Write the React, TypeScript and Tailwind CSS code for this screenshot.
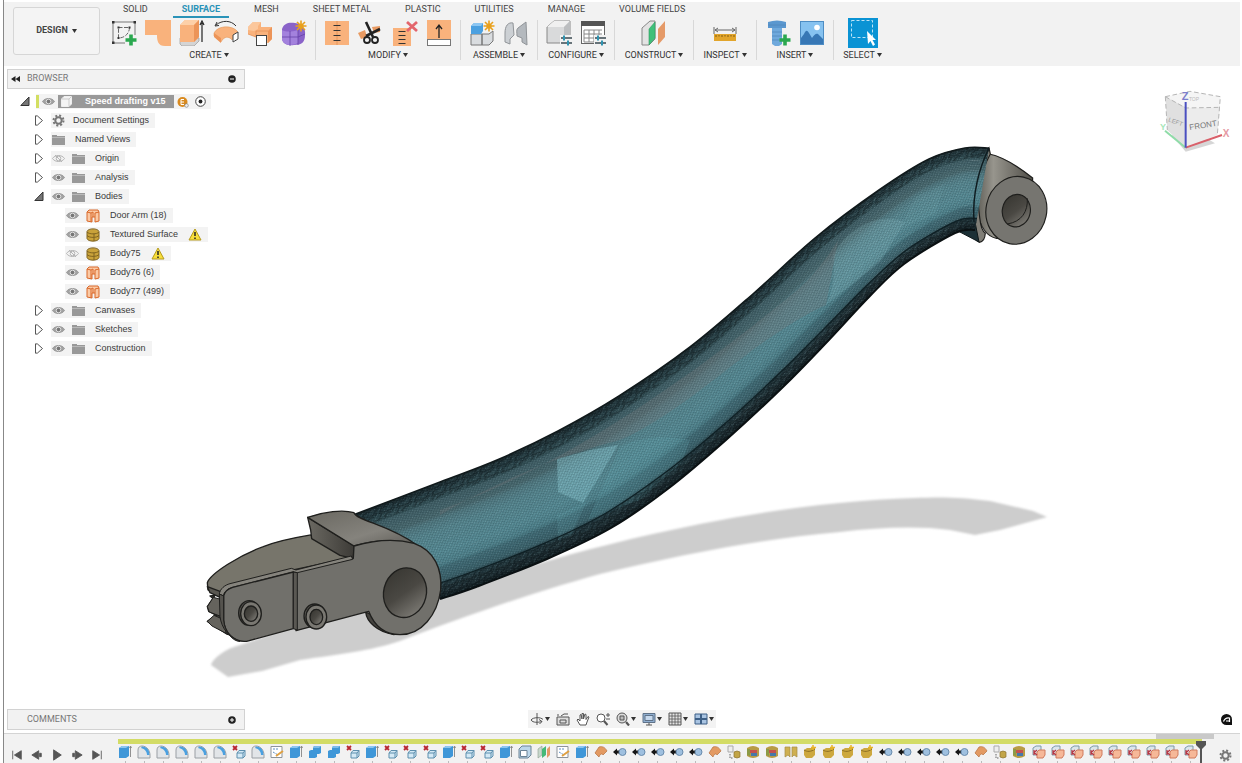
import type { ReactNode } from "react";
import clsx from "clsx";

type Pt = [number, number];

const Caret = () => (
  <svg width="5" height="4" viewBox="0 0 5 4" className="shrink-0">
    <path d="M0 0H5L2.5 4Z" fill="#333" />
  </svg>
);

/* ---------- toolbar icons (26 x 26) ---------- */

const Icon = ({ children, size = 26 }: { children: ReactNode; size?: number }) => (
  <svg width={size} height={size} viewBox={`0 0 ${size} ${size}`} fill="none" className="shrink-0">
    {children}
  </svg>
);

const Plus = ({ x, y }: { x: number; y: number }) => (
  <path d={`M${x} ${y - 5.5}V${y + 5.5}M${x - 5.5} ${y}H${x + 5.5}`} stroke="#2aa84f" strokeWidth="3.6" />
);

const Star = ({ x, y }: { x: number; y: number }) => (
  <g stroke="#e8a01c" strokeWidth="1.6">
    <path d={`M${x} ${y - 5.5}V${y + 5.5}M${x - 5.5} ${y}H${x + 5.5}M${x - 4} ${y - 4}L${x + 4} ${y + 4}M${x + 4} ${y - 4}L${x - 4} ${y + 4}`} />
    <circle cx={x} cy={y} r="2.6" fill="#e8a01c" stroke="none" />
  </g>
);

const SketchIcon = () => (
  <Icon>
    <path d="M2 2H24V15M2 2V23H14" stroke="#777" />
    <path d="M7.500 7.500H18.500C18.500 13 14 18 7.500 18Z" stroke="#666" strokeDasharray="4 1.5" />
    <g fill="#333">
      <rect x="1" y="1" width="2.500" height="2.500" />
      <rect x="22.500" y="1" width="2.500" height="2.500" />
      <rect x="1" y="21.500" width="2.500" height="2.500" />
      <rect x="6.500" y="6.500" width="2" height="2" />
      <rect x="17.500" y="6.500" width="2" height="2" />
      <rect x="6.500" y="17" width="2" height="2" />
    </g>
    <Plus x={20} y={20} />
  </Icon>
);

const PatchIcon = () => (
  <Icon>
    <path d="M0 0H26V26H20C13 26 12 21 12 15H0Z" fill="#f9b27c" />
  </Icon>
);

const ExtrudeIcon = () => (
  <Icon>
    <path d="M1 22V24L3 26H15L20 21V18H1Z" fill="#d4d4d4" stroke="#999" strokeWidth=".7" />
    <path d="M1 5L6 0H20V17L15 22H1Z" fill="#f9b27c" />
    <path d="M1 5L6 0H20L15 5Z" fill="#fdd0a8" />
    <path d="M15 5L20 0V17L15 22Z" fill="#ec9458" />
    <path d="M23 22V3M21 5L23 1L25 5" stroke="#222" strokeWidth="1.2" />
  </Icon>
);

const RevolveIcon = () => (
  <Icon>
    <path d="M1 13C5 5 20 5 25 12L19 20C16 16 11 16 8 22L1 16Z" fill="#f9b27c" stroke="#e39a60" strokeWidth=".6" />
    <path d="M1 13L8 18V23L1 17Z" fill="#ec9458" />
    <path d="M20 15L25 12V19L20 22Z" fill="#fff" stroke="#444" />
    <path d="M3 5C9 0 18 0 23 6M2 6L6 5.500M2 6L4 2" stroke="#333" />
  </Icon>
);

const SweepIcon = () => (
  <Icon>
    <path d="M1 7L6 2H14V7H25V19L21 23H9V17L1 14Z" fill="#f9b27c" />
    <path d="M1 7L6 2H14L11 6V9L7 11L1 10Z" fill="#fbc79c" />
    <path d="M21 11L25 7V19L21 23Z" fill="#ec9458" />
    <path d="M1 14L9 17V11H21" stroke="#e58f55" strokeWidth=".8" />
    <rect x="9.500" y="15.500" width="10" height="10" fill="#fff" stroke="#444" />
  </Icon>
);

const FormIcon = () => (
  <Icon>
    <path d="M1 9C3 3 8 2 14 3C21 4 25 8 24 15C24 22 21 25 13 25C5 26 1 23 1 18Z" fill="#8a63c9" />
    <path d="M1 10C5 12 10 12 17 10L17 23C11 26 4 26 1 20Z" fill="#a382dd" />
    <path d="M9 11V26M1 17H17L24 14M17 10V25" stroke="#6541a8" strokeWidth=".8" />
    <Star x={20} y={6} />
  </Icon>
);

const StitchIcon = () => (
  <Icon>
    <rect x="1" y="1" width="24" height="24" fill="#f9b27c" />
    <path d="M13 1V25" stroke="#e08f54" strokeWidth=".8" />
    <path d="M9.500 5.500H16.500M9.500 10.500H16.500M9.500 15.500H16.500M9.500 20.500H16.500" stroke="#333" />
  </Icon>
);

const TrimIcon = () => (
  <Icon>
    <path d="M0 13L7 10L9 17L3 19Z" fill="#e89a62" />
    <path d="M14 7L22 6V12L16 13Z" fill="#e89a62" />
    <path d="M8 2L15 17M22 9L8 16" stroke="#222" strokeWidth="2.600" />
    <circle cx="9" cy="20" r="3" stroke="#222" strokeWidth="1.800" />
    <circle cx="17" cy="20" r="3" stroke="#222" strokeWidth="1.800" />
  </Icon>
);

const UnstitchIcon = () => (
  <Icon>
    <rect x="1" y="8" width="18" height="18" fill="#f9b27c" />
    <path d="M6.500 11.500H13.500M6.500 15.500H13.500M6.500 19.500H13.500M6.500 23.500H13.500" stroke="#333" />
    <path d="M15 2L25 11M25 2L15 11" stroke="#e3656c" strokeWidth="2.800" />
  </Icon>
);

const ExtendIcon = () => (
  <Icon>
    <rect x="1" y="0" width="24" height="19" fill="#f9b27c" />
    <rect x="1.500" y="19.500" width="23" height="6" fill="#fff" stroke="#777" />
    <path d="M13 18V6M10 9L13 5L16 9" stroke="#222" strokeWidth="1.300" />
  </Icon>
);

const NewComponentIcon = () => (
  <Icon>
    <path d="M2 14H13V25H2ZM13 14H20L24 11V21L20 25H13Z" fill="#d9dcdf" stroke="#777" />
    <path d="M2 6L5 3H14V11L12 14H2Z" fill="#4ba0e0" />
    <path d="M2 6L5 3H14L12 6Z" fill="#8cc6f2" />
    <Star x={20} y={6} />
  </Icon>
);

const JointIcon = () => (
  <Icon>
    <path d="M2 13C2 6 5 2 10 3L11 15L7 19V24L2 22Z" fill="#ccd0d4" stroke="#909498" />
    <path d="M23 2L24 25L19 22V18L14 16C14 12 13 10 15 8L19 5Z" fill="#b4b9be" stroke="#909498" />
  </Icon>
);

const Sliders = () => (
  <g stroke="#3a4a52" strokeWidth="1.300">
    <rect x="14" y="15" width="12" height="11" fill="#f2f2f2" stroke="none" />
    <path d="M15 18H26M15 23H26" />
    <path d="M18 15.500V20.500M22 20.500V25.500" stroke="#2f93b0" strokeWidth="2" />
  </g>
);

const ConfigureIcon = () => (
  <Icon>
    <path d="M1 7L8 1H24V18L19 23H1Z" fill="#d9dadb" stroke="#888" />
    <path d="M1 7L8 1H24L18 7Z" fill="#f0f0f0" />
    <path d="M18 7L24 1V18L18 23Z" fill="#bcbec0" />
    <Sliders />
  </Icon>
);

const TableIcon = () => (
  <Icon>
    <rect x="1.500" y="1.500" width="23" height="22" fill="#fff" stroke="#666" />
    <rect x="1" y="1" width="24" height="5" fill="#555" />
    <path d="M4 10H22M4 14H22M4 18H22M4 22H14M4 10V22M9 10V22M14 10V22M19 10V22" stroke="#888" />
    <Sliders />
  </Icon>
);

const PlaneIcon = () => (
  <Icon>
    <path d="M1 8L9 1H14V19L8 25H1Z" fill="#e3e3e3" stroke="#888" />
    <path d="M8 9L14 2V18L8 25Z" fill="#3fc07a" stroke="#2e9c5e" strokeWidth=".6" />
    <path d="M17 9L24 1V17L17 25Z" fill="#e59a68" />
  </Icon>
);

const MeasureIcon = () => (
  <Icon>
    <path d="M2 7V14M24 7V14M3 10H23M6 8L3 10L6 12M20 8L23 10L20 12" stroke="#666" />
    <rect x="2" y="14" width="22" height="7" fill="#e2a52b" />
    <path d="M4 15V17M7 15V16.500M10 15V17M13 15V16.500M16 15V17M19 15V16.500M22 15V17" stroke="#805c12" />
  </Icon>
);

const BoltIcon = () => (
  <Icon>
    <path d="M3 2Q12 -1 21 2V8H3Z" fill="#5a97cf" />
    <path d="M7 8H17V24L14 26H10L7 24Z" fill="#6fa9dc" />
    <path d="M7 12H17M7 16H17M7 20H17M3 5H21" stroke="#5088bb" strokeWidth=".8" />
    <Plus x={20} y={20} />
  </Icon>
);

const ImageIcon = () => (
  <Icon>
    <rect x="1.500" y="1.500" width="23" height="23" fill="#86c2f0" stroke="#4e8dc4" />
    <path d="M2 18L5 14C7 10 8 10 10 13L13 18C15 15 17 13 19 14L24 19V24H2Z" fill="#3777b5" />
    <circle cx="18" cy="7.500" r="2.800" fill="#fff" />
  </Icon>
);

const SelectIcon = () => (
  <Icon size={30}>
    <rect width="30" height="30" fill="#0a93d4" />
    <rect x="3.500" y="2.500" width="21" height="17" stroke="#bfe4f7" strokeDasharray="3 2" />
    <path d="M19 13L20 26L22.500 23L25 28L27 26.500L24.500 22H28Z" fill="#fff" />
  </Icon>
);

const tabs = ["SOLID", "SURFACE", "MESH", "SHEET METAL", "PLASTIC", "UTILITIES", "MANAGE", "VOLUME FIELDS"];

const groups: { label: string; width?: string; icons: ReactNode[] }[] = [
  { label: "CREATE", icons: [<SketchIcon />, <PatchIcon />, <ExtrudeIcon />, <RevolveIcon />, <SweepIcon />, <FormIcon />] },
  { label: "MODIFY", icons: [<StitchIcon />, <TrimIcon />, <UnstitchIcon />, <ExtendIcon />] },
  { label: "ASSEMBLE", icons: [<NewComponentIcon />, <JointIcon />] },
  { label: "CONFIGURE", icons: [<ConfigureIcon />, <TableIcon />] },
  { label: "CONSTRUCT", width: "w-[79px]", icons: [<PlaneIcon />] },
  { label: "INSPECT", width: "w-[63px]", icons: [<MeasureIcon />] },
  { label: "INSERT", icons: [<BoltIcon />, <ImageIcon />] },
  { label: "SELECT", width: "w-[58px]", icons: [<SelectIcon />] },
];

const Toolbar = () => (
  <header className="mt-[2px] flex h-16 shrink-0 bg-[#f2f2f2]">
    <button className="mt-[5px] ml-[9px] flex h-12 w-[87px] shrink-0 items-center justify-center gap-1 rounded-[3px] border border-[#d6d6d6] bg-[#f4f4f4] text-[9px] font-bold text-[#444]">
      DESIGN <Caret />
    </button>
    <div className="ml-[3px]">
      <nav className="flex h-4 gap-4 pl-[11px]">
        {tabs.map((tab) => (
          <button
            key={tab}
            className={clsx(
              "h-4 border-b-2 px-[9px] text-[9px] leading-[12px] whitespace-nowrap",
              tab === "SURFACE" ? "border-[#2a93b8] font-bold text-[#2a93b8]" : "border-transparent text-[#444]"
            )}
          >
            {tab}
          </button>
        ))}
      </nav>
      <div className="flex pt-[2px]">
        {groups.map((group) => (
          <div
            key={group.label}
            className={clsx("flex h-10 flex-col items-center border-r border-[#d8d8d8] px-2 last:border-transparent", group.width)}
          >
            <div className="flex h-[26px] items-center gap-2">
              {group.icons.map((icon, i) => (
                <button key={i} aria-label={`${group.label} ${i + 1}`}>
                  {icon}
                </button>
              ))}
            </div>
            <button className="mt-[3px] flex items-center gap-[2px] text-[9px] leading-[12px] whitespace-nowrap text-[#333]">
              {group.label} <Caret />
            </button>
          </div>
        ))}
      </div>
    </div>
  </header>
);

/* ---------- browser tree ---------- */

const Eye = ({ off }: { off?: boolean }) => (
  <svg width="13" height="9" viewBox="0 0 13 9" fill="none">
    <path d="M.5 4.500C3 .5 10 .5 12.500 4.500C10 8.500 3 8.500 .5 4.500Z" fill={off ? "none" : "#a2a2a2"} stroke={off ? "#b5b5b5" : "#999"} />
    <circle cx="6.500" cy="4.500" r="2.300" fill={off ? "none" : "#777"} stroke={off ? "#b5b5b5" : "#e0e0e0"} />
    {off && <path d="M3 1L10 8" stroke="#b5b5b5" />}
  </svg>
);

const Folder = () => (
  <svg width="13" height="11" viewBox="0 0 13 11">
    <path d="M0 1H5V2H13V11H0Z" fill="#999" />
    <path d="M0 3.500H13" stroke="#b9b9b9" />
  </svg>
);

const Gear = () => (
  <svg width="13" height="13" viewBox="0 0 13 13" fill="none">
    <circle cx="6.500" cy="6.500" r="3.200" stroke="#777" strokeWidth="2" />
    <circle cx="6.500" cy="6.500" r="5" stroke="#777" strokeWidth="2" strokeDasharray="2 1.930" />
  </svg>
);

const SurfaceBody = () => (
  <svg width="14" height="14" viewBox="0 0 14 14">
    <path d="M1 3L3 1H12L13 3V12L9 13V8H6V13L1 12Z" fill="#fbc9a4" stroke="#d9682a" />
    <path d="M1 3L5 4V13M5 4L7 3V8M13 3L9 4V8" fill="none" stroke="#d9682a" />
  </svg>
);

const SolidBody = () => (
  <svg width="14" height="14" viewBox="0 0 14 14">
    <path d="M1 3.500C2 0 12 0 13 3.500V10.500C12 14 2 14 1 10.500Z" fill="#c9a23a" stroke="#806420" />
    <path d="M1 4C3 6.500 11 6.500 13 4M1 7.500C3 10 11 10 13 7.500M8 5.500V13" fill="none" stroke="#806420" />
  </svg>
);

const Warning = () => (
  <svg width="14" height="13" viewBox="0 0 14 13">
    <path d="M7 1L13 12H1Z" fill="#f7de3a" stroke="#b59a1e" strokeLinejoin="round" />
    <path d="M7 4V8M7 9.500V11" stroke="#222" strokeWidth="1.500" />
  </svg>
);

const Disclosure = ({ open, name }: { open?: boolean; name: string }) => (
  <button aria-label={`Toggle ${name}`} className="flex w-[10px] shrink-0 justify-center">
    <svg width="10" height="11" viewBox="0 0 10 11">
      {open ? <path d="M9 1V9.500H.8Z" fill="#777" stroke="#333" /> : <path d="M1.500 .8V10.200L3.500 10L8.500 5.500L3.500 1Z" fill="#fff" stroke="#555" />}
    </svg>
  </button>
);

type Row = {
  name: string;
  kind: "settings" | "views" | "folder" | "surface" | "solid";
  open?: boolean;
  hidden?: boolean;
  warn?: boolean;
};

const rows: Row[] = [
  { name: "Document Settings", kind: "settings" },
  { name: "Named Views", kind: "views" },
  { name: "Origin", kind: "folder", hidden: true },
  { name: "Analysis", kind: "folder" },
  { name: "Bodies", kind: "folder", open: true },
  { name: "Door Arm (18)", kind: "surface" },
  { name: "Textured Surface", kind: "solid", warn: true },
  { name: "Body75", kind: "solid", hidden: true, warn: true },
  { name: "Body76 (6)", kind: "surface" },
  { name: "Body77 (499)", kind: "surface" },
  { name: "Canvases", kind: "folder" },
  { name: "Sketches", kind: "folder" },
  { name: "Construction", kind: "folder" },
];

const TreeRow = ({ row }: { row: Row }) => {
  const body = row.kind === "surface" || row.kind === "solid";
  const hasEye = body || row.kind === "folder";
  return (
    <li className={clsx("flex h-[19px] items-center", body ? "pl-[61px]" : "pl-[30px]")}>
      {!body && (
        <span className="mr-[7px] flex">
          <Disclosure open={row.open} name={row.name} />
        </span>
      )}
      <div className="flex h-[15px] items-center bg-[#f3f3f3] pr-[6px] pl-px">
        {hasEye && (
          <button aria-label={`Show ${row.name}`} className="mr-[7px]">
            <Eye off={row.hidden} />
          </button>
        )}
        {row.kind === "settings" ? <Gear /> : row.kind === "surface" ? <SurfaceBody /> : row.kind === "solid" ? <SolidBody /> : <Folder />}
        <span className={clsx("whitespace-nowrap", row.kind === "settings" ? "ml-2" : "ml-[10px]")}>{row.name}</span>
        {row.warn && (
          <span className="ml-[10px]">
            <Warning />
          </span>
        )}
      </div>
    </li>
  );
};

const Browser = () => (
  <section className="mt-[3px]">
    <div className="ml-[3px] flex h-5 w-[238px] items-center border border-[#d2d2d2] bg-[#f2f2f2] pl-[3px]">
      <svg width="9" height="6" viewBox="0 0 9 6">
        <path d="M4.500 0V6L0 3ZM9 0V6L4.500 3Z" fill="#222" />
      </svg>
      <h2 className="ml-[7px] text-[9px] text-[#777]">BROWSER</h2>
      <button aria-label="Collapse browser" className="mr-2 ml-auto">
        <svg width="8" height="8" viewBox="0 0 8 8">
          <circle cx="4" cy="4" r="3.800" fill="#222" />
          <path d="M2 4H6" stroke="#fff" />
        </svg>
      </button>
    </div>
    <ul className="mt-[3px] font-['Liberation_Sans',sans-serif] text-[9px] text-[#3a3a3a]">
      <li className="flex h-[19px] items-center pl-4">
        <Disclosure open name="Speed drafting v15" />
        <div className="ml-[6px] flex h-[15px] items-center bg-[#f3f3f3] pr-[5px]">
          <span className="h-[13px] w-[3px] bg-[#d3df62]" />
          <button aria-label="Show Speed drafting v15" className="mx-[3px]">
            <Eye />
          </button>
          <div className="flex h-[13px] items-center bg-[#999] pr-2 pl-[2px] font-bold text-white">
            <svg width="13" height="13" viewBox="0 0 13 13">
              <path d="M1.500 4L4 1.500H11.500V9L9 11.500H1.500Z" fill="#f4f4f4" stroke="#eee" />
              <path d="M1.500 4H9V11.500M9 4L11.500 1.500" fill="none" stroke="#bbb" strokeWidth=".7" />
            </svg>
            <span className="ml-3 whitespace-nowrap">Speed drafting v15</span>
          </div>
          <svg width="12" height="12" viewBox="0 0 12 12" className="ml-[3px]">
            <circle cx="5.500" cy="6" r="5" fill="#d98a1f" />
            <path d="M4 3.500H7M4 6H7M4 8.500H7M4 3.500V8.500" stroke="#fff" fill="none" />
            <circle cx="9.500" cy="9.500" r="1.800" fill="#eee" stroke="#777" strokeWidth=".6" />
          </svg>
          <svg width="11" height="11" viewBox="0 0 11 11" className="ml-[6px]">
            <circle cx="5.500" cy="5.500" r="4.800" fill="#fff" stroke="#444" />
            <circle cx="5.500" cy="5.500" r="1.900" fill="#222" />
          </svg>
        </div>
      </li>
      {rows.map((row) => (
        <TreeRow key={row.name} row={row} />
      ))}
    </ul>
  </section>
);

/* ---------- 3D model ---------- */

// matching points along the upper and lower silhouette of the arm
const upper: Pt[] = [[353, 515], [440, 482], [497, 460], [558, 431], [619, 396], [690, 347], [754, 293], [815, 238], [879, 190], [929, 159], [965, 148], [989, 148]];
const lower: Pt[] = [[440, 599], [476, 587], [547, 559], [611, 528], [669, 488], [726, 440], [783, 387], [826, 343], [869, 297], [904, 264], [955, 233], [975, 230]];

const along = (f: number): Pt[] => upper.map(([x, y], i) => [x + (lower[i][0] - x) * f, y + (lower[i][1] - y) * f]);

// Catmull-Rom through the points, as bezier segments
const curve = (p: Pt[]) =>
  p.slice(1).map(([x, y], i) => {
    const a = p[Math.max(i - 1, 0)];
    const b = p[i];
    const d = p[Math.min(i + 2, p.length - 1)];
    return `C${(b[0] + (x - a[0]) / 6).toFixed(1)} ${(b[1] + (y - a[1]) / 6).toFixed(1)} ${(x - (d[0] - b[0]) / 6).toFixed(1)} ${(y - (d[1] - b[1]) / 6).toFixed(1)} ${x.toFixed(1)} ${y.toFixed(1)}`;
  }).join("");

const line = (f: number) => {
  const p = along(f);
  return `M${p[0]}${curve(p)}`;
};

const band = (from: number, to: number) => {
  const a = along(from);
  const b = along(to).reverse();
  return `M${a[0]}${curve(a)}L${b[0]}${curve(b)}Z`;
};

const stops: [number, number, number, number][] = [
  [0, 26, 40, 44],
  [0.06, 36, 58, 64],
  [0.13, 50, 78, 84],
  [0.15, 64, 94, 101],
  [0.27, 74, 106, 112],
  [0.31, 82, 122, 130],
  [0.4, 88, 136, 145],
  [0.6, 88, 141, 151],
  [0.7, 80, 131, 141],
  [0.73, 66, 110, 120],
  [0.84, 58, 96, 105],
  [0.87, 34, 55, 61],
  [0.94, 27, 41, 46],
  [1, 14, 24, 28],
];

const shade = (f: number) => {
  const i = Math.max(1, stops.findIndex((s) => s[0] >= f));
  const a = stops[i - 1];
  const b = stops[i];
  const t = (f - a[0]) / (b[0] - a[0]);
  return `rgb(${[1, 2, 3].map((k) => Math.round(a[k] + (b[k] - a[k]) * t)).join(",")})`;
};

const STRIPS = 50;

const ArmModel = () => (
  <svg viewBox="4 66 1236 667" preserveAspectRatio="xMidYMid meet" className="absolute inset-0 h-full w-full" role="img" aria-label="Door arm">
    <defs>
      <pattern id="mesh" width="4" height="3" patternUnits="userSpaceOnUse" patternTransform="rotate(-32)">
        <path d="M0 .5H2M2 2H4M0 2L1.500 .5M2 .5L4 2" stroke="#0b2026" strokeWidth=".6" strokeOpacity=".32" fill="none" />
        <path d="M.5 1.500H1.500M3 .5H4" stroke="#b5e0e6" strokeWidth=".6" strokeOpacity=".3" />
      </pattern>
      <pattern id="scales" width="17" height="7" patternUnits="userSpaceOnUse" patternTransform="rotate(-41)">
        <path d="M0 2C3 0 5 1 8 2.500S13 4 17 2M2 5C5 3.500 8 4 11 6M12 5.500L16 4.500M0 6.500L4 6" stroke="#060c0e" strokeWidth=".9" strokeOpacity=".55" fill="none" />
        <path d="M1 3.500H4M9 1H12M13 6.500H15" stroke="#6f989f" strokeWidth=".6" strokeOpacity=".25" />
      </pattern>
      <linearGradient id="bore" x1="0" y1="0" x2="1" y2="1">
        <stop offset="0" stopColor="#35342f" />
        <stop offset=".5" stopColor="#4a4843" />
        <stop offset="1" stopColor="#8a8882" />
      </linearGradient>
      <linearGradient id="barrel" x1="0" y1="0" x2="1" y2="0">
        <stop offset="0" stopColor="#5f5d56" />
        <stop offset=".3" stopColor="#97958d" />
        <stop offset="1" stopColor="#504e48" />
      </linearGradient>
      <linearGradient id="block" x1="0" y1="0" x2="1" y2="1">
        <stop offset="0" stopColor="#6a6861" />
        <stop offset=".6" stopColor="#85837d" />
        <stop offset="1" stopColor="#5c5a55" />
      </linearGradient>
      <linearGradient id="side" x1="0" y1="0" x2="1" y2="0">
        <stop offset="0" stopColor="#6b6962" />
        <stop offset="1" stopColor="#3d3b37" />
      </linearGradient>
      <filter id="soft">
        <feGaussianBlur stdDeviation="1.200" />
      </filter>
    </defs>

    {/* ground shadow */}
    <path
      d="M1047 517L1033 511L990 501C960 497 940 497 915 498C850 500 780 508 700 524C640 536 580 551 530 566L400 590L240 645C225 649 213 658 211 665L228 677L262 671L300 660C340 654 370 651 400 641C450 622 520 596 600 574C680 555 760 539 840 532C880 527 920 526 950 530L975 535L1000 530Z"
      fill="#cdcdcd"
      filter="url(#soft)"
    />

    {/* round end */}
    <g transform="translate(930 130) scale(.33333)" stroke="#1f1f1d" strokeWidth="3.500">
      <path d="M178 72C225 82 268 112 308 144L300 320L200 325C170 320 150 290 140 240C138 170 150 110 178 72Z" fill="url(#barrel)" />
      <ellipse cx="259" cy="241" rx="91" ry="102" fill="#767570" transform="rotate(12 259 241)" />
      <ellipse cx="259" cy="242" rx="42" ry="49" fill="url(#bore)" transform="rotate(12 259 242)" />
      <path d="M292 205C294 245 275 275 232 282" fill="none" strokeWidth="3" />
      <path d="M177 54L181 72C152 125 138 190 149 262C152 290 158 305 166 309C165 325 158 336 148 337C136 332 130 312 130 290C128 200 145 120 177 54Z" fill="#807e77" />
    </g>

    {/* textured skin */}
    <path d="M946 232L958 231L979 242L975 222L974 215L965 216Z" fill="#1c3036" stroke="#0e1719" />
    {Array.from({ length: STRIPS }, (_, i) => (
      <path key={i} d={band(i / STRIPS, Math.min(1, (i + 1.3) / STRIPS))} fill={shade((i + 0.5) / STRIPS)} />
    ))}
    <path d="M557 459L590 450L618 445L601 474L583 503L558 492Z" fill="#8ac8d2" fillOpacity=".5" />
    <path d="M557 515L586 502L572 534L558 540Z" fill="#6fb2bd" fillOpacity=".2" />
    <path d="M620 447C640 436 665 436 690 440L682 462L640 500L588 520Z" fill="#6bb2bd" fillOpacity=".2" />
    <path d="M833 255C850 225 880 212 905 222L880 262L826 305C834 290 835 270 833 255Z" fill="#8fc5cd" fillOpacity=".25" />
    <path d="M900 228L916 196L945 184L935 215Z" fill="#86bfc8" fillOpacity=".12" />
    <path d="M440 510C560 470 700 370 790 296C810 280 825 262 838 240L826 305C750 340 690 410 620 440C560 455 500 480 440 515Z" fill="#7b7f80" fillOpacity=".35" />
    <path d={band(0, 1)} fill="url(#mesh)" />
    <path d={band(0, 0.13)} fill="url(#scales)" />
    <path d={band(0.86, 1)} fill="url(#scales)" />
    <path d={line(0)} fill="none" stroke="#10191b" strokeWidth="1.600" />
    <path d={line(1)} fill="none" stroke="#0a1012" strokeWidth="2" />
    <path d={line(0.86)} fill="none" stroke="#0f2025" strokeWidth="1.200" />
    <path d="M989 148C979 168 972 195 974 222" fill="none" stroke="#0f1c20" strokeWidth="1.500" />

    {/* hinge end */}
    <g transform="translate(190 490) scale(.33333)" stroke="#1f1f1d" strokeWidth="4" strokeLinejoin="round">
      <path d="M100 350L60 318L75 316L52 350L56 364L80 376L52 394L110 432L140 440Z" fill="#3f3e3a" />
      <path d="M52 350L70 322L100 330V382L58 366Z" fill="#65635d" strokeWidth="3" />
      <path d="M52 394L72 376L104 390L108 430L66 408Z" fill="#65635d" strokeWidth="3" />
      <path d="M52 278C62 250 150 195 220 170C270 150 320 142 362 135L484 202L310 240L120 290L100 320L54 300Z" fill="#77756b" />
      <path d="M52 290L100 308L98 326L60 308Z" fill="#5a5852" />
      <path d="M353 82L492 168L490 206L450 196L365 146L362 120Z" fill="url(#side)" />
      <path d="M353 82C400 65 460 58 492 68C500 92 600 105 680 165C620 146 560 148 492 168Z" fill="url(#block)" />
      <path d="M527 366C530 395 560 425 612 434L600 400Z" fill="#45433f" />
      <path d="M492 168C560 148 620 146 672 160C735 182 757 240 752 300C742 375 695 434 630 434C580 434 552 405 536 364L318 422L314 245L490 205Z" fill="#71706b" />
      <path d="M88 312C90 296 105 285 120 281L304 235L318 240L484 198L488 208L322 248L310 246L128 292C112 297 102 305 101 318Z" fill="#86847d" strokeWidth="3" />
      <path d="M101 318C103 305 112 297 128 292L310 246V416L170 454C130 458 103 425 101 390Z" fill="#71706b" />
      <path d="M88 312L101 318V390C103 425 130 456 150 454C115 440 95 415 90 380Z" fill="#55534e" strokeWidth="3" />
      <path d="M310 246L322 248V420L310 416Z" fill="#5a5853" strokeWidth="3" />
      <ellipse cx="645" cy="308" rx="64" ry="75" fill="url(#bore)" transform="rotate(14 645 308)" />
      <ellipse cx="178" cy="369" rx="32" ry="37" fill="#5c5a55" />
      <ellipse cx="183" cy="371" rx="31" ry="36" fill="#7a7872" />
      <ellipse cx="183" cy="371" rx="20" ry="23" fill="url(#bore)" />
      <ellipse cx="374" cy="378" rx="32" ry="36" fill="#5c5a55" />
      <ellipse cx="379" cy="381" rx="31" ry="36" fill="#7a7872" />
      <ellipse cx="379" cy="381" rx="19" ry="23" fill="url(#bore)" />
    </g>

    {/* view cube */}
    <g transform="translate(1140 80) scale(.33333)">
      <path d="M95 165L137 215L225 190L200 175Z" fill="#999" fillOpacity=".4" filter="url(#soft)" />
      <path d="M76 50L150 34L241 50L240 82L137 84Z" fill="#f5f5f5" />
      <path d="M76 50L137 82V203L82 150Z" fill="#e0e0e0" />
      <path d="M137 84L240 82L232 165L137 203Z" fill="#ececec" />
      <path d="M76 50L150 34L241 50L232 165M76 50L82 150M76 50L137 84L241 82" fill="none" stroke="#b5b5b5" strokeWidth="3" strokeDasharray="14 8" />
      <path d="M137 203L75 152" stroke="#8fdca8" strokeWidth="6" />
      <path d="M137 203L246 165" stroke="#d9606a" strokeWidth="6" />
      <path d="M137 66V203" stroke="#4a4fc0" strokeWidth="6" />
    </g>
    <g fontFamily="Liberation Sans, sans-serif" textAnchor="middle">
      <text x="1185" y="100" fontSize="11" fontWeight="bold" fill="#7c7ecb">Z</text>
      <text x="1226" y="137" fontSize="10" fontWeight="bold" fill="#e59aa4">X</text>
      <text x="1163" y="130" fontSize="9" fontWeight="bold" fill="#a5e6b8">Y</text>
      <text x="1203" y="128" fontSize="8" fill="#777" transform="rotate(-9 1203 125)">FRONT</text>
      <text x="1176" y="124" fontSize="6" fill="#999" transform="rotate(20 1176 121)">LEFT</text>
      <text x="1194" y="101" fontSize="5" fill="#bbb">TOP</text>
    </g>
  </svg>
);

/* ---------- bottom bars ---------- */

const navTools: { name: string; menu?: boolean; icon: ReactNode }[] = [
  {
    name: "Orbit",
    menu: true,
    icon: <><path d="M7 1V13M1 8C3 5 11 5 13 7.500" /><path d="M1 8C3 11 8 10.500 12 9.500M9 7.500L12 9.500L9.500 12" /></>,
  },
  {
    name: "Look at",
    icon: <><path d="M1 5H13V13H1Z" fill="#ddd" /><path d="M4 8H10V11H4ZM2 4V2M5 4L8 2H12" /></>,
  },
  {
    name: "Pan",
    icon: <path d="M4 13L1 8L2 7L4 9V3L5 2.500L6 7V1.500H7.500V7L9 2L10 2.500V7.500L12 4.500L13 5L11 10L10 13Z" fill="#fff" />,
  },
  {
    name: "Zoom",
    icon: <><circle cx="5" cy="6" r="4" fill="#fff" /><path d="M8 9L11.500 13" strokeWidth="2" /><path d="M10 3H14M12 1V5M10 7H14" /></>,
  },
  {
    name: "Fit",
    menu: true,
    icon: <><circle cx="6" cy="6" r="5" fill="#ddd" /><path d="M10 10L13 13.500" strokeWidth="2.200" /><path d="M4 4H8V8H4Z" fill="#bbb" /></>,
  },
  {
    name: "Display settings",
    menu: true,
    icon: <><path d="M1 1.500H13V10.500H1Z" fill="#8faed0" stroke="#5f7288" /><path d="M3 3.500H11V8.500H3Z" fill="#c6d9ee" stroke="#5f7288" /><path d="M4 13H10M7 11V13" /></>,
  },
  {
    name: "Grid and snaps",
    menu: true,
    icon: <><path d="M1 1H13V13H1Z" fill="#e4e4e4" /><path d="M4 1V13M7 1V13M10 1V13M1 4H13M1 7H13M1 10H13" strokeWidth=".8" /></>,
  },
  {
    name: "Viewports",
    menu: true,
    icon: <><path d="M1 2H13V12H1Z" fill="#a9c4e2" stroke="#3d5f86" /><path d="M7 2V12M1 7H13" stroke="#3d5f86" strokeWidth="2" /></>,
  },
];

const ViewBar = () => (
  <div className="mb-[5px] flex h-[18px] items-center gap-[6px] bg-[#f3f3f3] px-[2px]">
    {navTools.map((tool) => (
      <button key={tool.name} aria-label={tool.name} className="flex items-center gap-px">
        <svg width="14" height="14" viewBox="0 0 14 14" fill="none" stroke="#555">
          {tool.icon}
        </svg>
        {tool.menu && <Caret />}
      </button>
    ))}
  </div>
);

const features: Record<string, ReactNode> = {
  extrude: (
    <>
      <path d="M1 3L4 1H11V11L8 13H1Z" fill="#3f97d8" />
      <path d="M1 3L4 1H11L8 3Z" fill="#8cc6f0" />
      <path d="M12.500 12V2M11.500 3L12.500 1L13.500 3" stroke="#777" fill="none" strokeWidth=".8" />
    </>
  ),
  fillet: (
    <>
      <path d="M1 13V5C1 2 3 1 5 1C10 1 13 6 13 10V13Z" fill="#e2e5e8" stroke="#9a9fa4" />
      <path d="M5 1.500C10 1.500 12.500 5 12.500 10H10C10 7 8 4 4 3Z" fill="#4ba0e0" />
    </>
  ),
  remove: (
    <>
      <path d="M1 1L5 5M5 1L1 5" stroke="#b8262f" strokeWidth="1.800" />
      <path d="M5 8L7 5.500H13V11L11 13H5ZM5 8H11V13M11 8L13 5.500" fill="#d4e9f5" stroke="#5d8fae" />
    </>
  ),
  sketch: (
    <>
      <path d="M1 1.500H12V12.500H1Z" fill="#fff" stroke="#8d9399" />
      <path d="M3 4H9M3 7L8 10" stroke="#5c8cc0" strokeDasharray="2 1" />
      <path d="M6 11L13 6" stroke="#e0a040" strokeWidth="2" />
    </>
  ),
  combine: (
    <>
      <path d="M5 2L7 1H13V8L11 9H9V12L7 13H1V6L3 5H5Z" fill="#3f97d8" />
      <path d="M5 2L7 1H13L11 3H5Z" fill="#7cbcec" />
    </>
  ),
  shell: (
    <>
      <path d="M1 4L4 1H13V10L10 13H1Z" fill="#bcd7ea" stroke="#6c8496" />
      <path d="M2.500 5.500H9V11.500H2.500Z" fill="#fff" stroke="#6c8496" />
    </>
  ),
  plane: (
    <>
      <path d="M1 4L5 1V10L1 13Z" fill="#c8d8cc" stroke="#8a9a8e" strokeWidth=".6" />
      <path d="M5 4L9 1V10L5 13Z" fill="#45b978" />
      <path d="M10 4L13 1V10L10 13Z" fill="#e39a68" />
    </>
  ),
  surface: (
    <path d="M1 8L5 2C8 1 11 2 13 6L9 10C8 8 6 9 5 12Z" fill="#e39a62" stroke="#b56f3c" strokeWidth=".7" />
  ),
  move: (
    <>
      <path d="M0 7L4 3.500V5.500H7V8.500H4V10.500Z" fill="#161616" />
      <circle cx="9.500" cy="7" r="3.500" fill="#9fc0df" stroke="#6a8cad" />
    </>
  ),
  pattern: (
    <>
      <path d="M1 1H6V7H1Z" fill="#eee" stroke="#aaa" />
      <path d="M3 9V13H6" stroke="#666" fill="none" strokeDasharray="1.500 1" />
      <path d="M7 7Q10 5 13 7V12Q10 14 7 12Z" fill="#c2a547" stroke="#8c7430" strokeWidth=".7" />
    </>
  ),
  mixed: (
    <>
      <path d="M1 3Q7 -1 13 3V11Q7 15 1 11Z" fill="#b89b45" />
      <path d="M4 5H11V8H4Z" fill="#c4524e" />
      <path d="M5 8H11V11H5Z" fill="#4678a8" />
      <path d="M1 4H4V11L1 10Z" fill="#8c9a46" />
    </>
  ),
  pair: (
    <path d="M1 2H6V12L4 10L1 12ZM8 2H13V12L10 10L8 12Z" fill="#cfb050" stroke="#a58d45" strokeWidth=".7" />
  ),
  body: (
    <>
      <path d="M1 5L4 3H12V10L9 13H3L1 10Z" fill="#cda83e" />
      <path d="M1 5C4 7 8 7 12 4" stroke="#8d7024" fill="none" />
      <path d="M10 0V5M8 2.500H13" stroke="#e8b428" strokeWidth="1.500" />
    </>
  ),
  trim: (
    <>
      <path d="M1 3L4 1H9V8L7 10H1Z" fill="#dce6ec" stroke="#7d9aa8" />
      <path d="M5 7L7 5H13V10L11 13H5Z" fill="#f6b898" stroke="#d07a5c" />
      <path d="M2 5V10M5 5L2 7.500L5 10" stroke="#b83340" strokeWidth="1.200" fill="none" />
    </>
  ),
};

const repeat = (name: string, count: number) => Array<string>(count).fill(name);

const timeline = [
  "extrude", ...repeat("fillet", 5), "remove", "fillet", "sketch", "extrude", "combine", "combine", "remove", "extrude",
  ...repeat("remove", 3), "extrude", "remove", "remove", "extrude", "shell", "plane", "sketch", "extrude", "surface",
  ...repeat("move", 5), "surface", "pattern", "mixed", "mixed", "pair", ...repeat("body", 4),
  ...repeat("move", 5), "surface", "pattern", "mixed", ...repeat("trim", 9),
];

const playback = [
  { name: "Go to start", d: "M2 2V12M12 2L4 7L12 12Z" },
  { name: "Step back", d: "M9 2L1 7L9 12ZM10 5H12V9H10Z" },
  { name: "Play", d: "M3 1L12 7L3 13Z" },
  { name: "Step forward", d: "M5 2L13 7L5 12ZM2 5H4V9H2Z" },
  { name: "Go to end", d: "M12 2V12M2 2L10 7L2 12Z" },
];

const Timeline = () => (
  <footer className="flex h-[30px] shrink-0 border-t border-[#d4d4d4] bg-[#f2f2f2]">
    <div className="flex w-[114px] shrink-0 gap-2 pt-[15px] pl-[7px]">
      {playback.map((step) => (
        <button key={step.name} aria-label={step.name} className="h-3 w-3">
          <svg width="12" height="12" viewBox="0 0 14 14" fill="#555" stroke="#555">
            <path d={step.d} />
          </svg>
        </button>
      ))}
    </div>
    <div className="relative min-w-0 flex-1">
      <div className="ml-auto h-[5px] w-[58px] bg-[#c9c9c9]" />
      <div className="mr-3 h-[5px] bg-[#d3dc66]" />
      <div className="mr-4 flex justify-between pt-px">
        {timeline.map((name, i) => (
          <button key={i} aria-label={`${name} ${i + 1}`} className="flex flex-col items-center gap-[2px]">
            <svg width="14" height="14" viewBox="0 0 14 14" fill="none">
              {features[name]}
            </svg>
            <span className="h-[2px] w-px bg-[#bbb]" />
          </button>
        ))}
      </div>
      <svg width="10" height="22" viewBox="0 0 10 22" className="absolute right-2 bottom-0">
        <path d="M0 0H10V4L6 8V22H4V8L0 4Z" fill="#555" />
      </svg>
    </div>
    <button aria-label="Timeline settings" className="mr-2 ml-[5px] pt-[14px]">
      <Gear />
    </button>
  </footer>
);

export default function App() {
  return (
    <div className="mr-[2px] ml-[3px] flex h-screen flex-col overflow-hidden border-l border-[#888] bg-white font-['Roboto',sans-serif]">
      <Toolbar />
      <main className="relative min-h-0 flex-1">
        <ArmModel />
        <div className="relative flex h-full flex-col justify-between">
          <Browser />
          <div className="grid grid-cols-[1fr_auto_1fr] items-end">
            <div className="mb-[3px] ml-[3px] flex h-[21px] w-[238px] items-center border border-[#d2d2d2] bg-[#f2f2f2] pl-[19px]">
              <h2 className="text-[9px] text-[#777]">COMMENTS</h2>
              <button aria-label="Add comment" className="mr-2 ml-auto">
                <svg width="8" height="8" viewBox="0 0 8 8">
                  <circle cx="4" cy="4" r="3.800" fill="#222" />
                  <path d="M2 4H6M4 2V6" stroke="#fff" />
                </svg>
              </button>
            </div>
            <ViewBar />
            <button aria-label="Assistant" className="mr-2 mb-2 ml-auto">
              <svg width="11" height="11" viewBox="0 0 11 11">
                <path d="M5.500 0A5.500 5.500 0 0 1 11 5.500V11H5.500A5.500 5.500 0 0 1 5.500 0Z" fill="#111" />
                <path d="M2.500 7.500C4 4 6 3.500 8.500 4V8M5 7H8" fill="none" stroke="#fff" strokeWidth="1.200" />
              </svg>
            </button>
          </div>
        </div>
      </main>
      <Timeline />
    </div>
  );
}
